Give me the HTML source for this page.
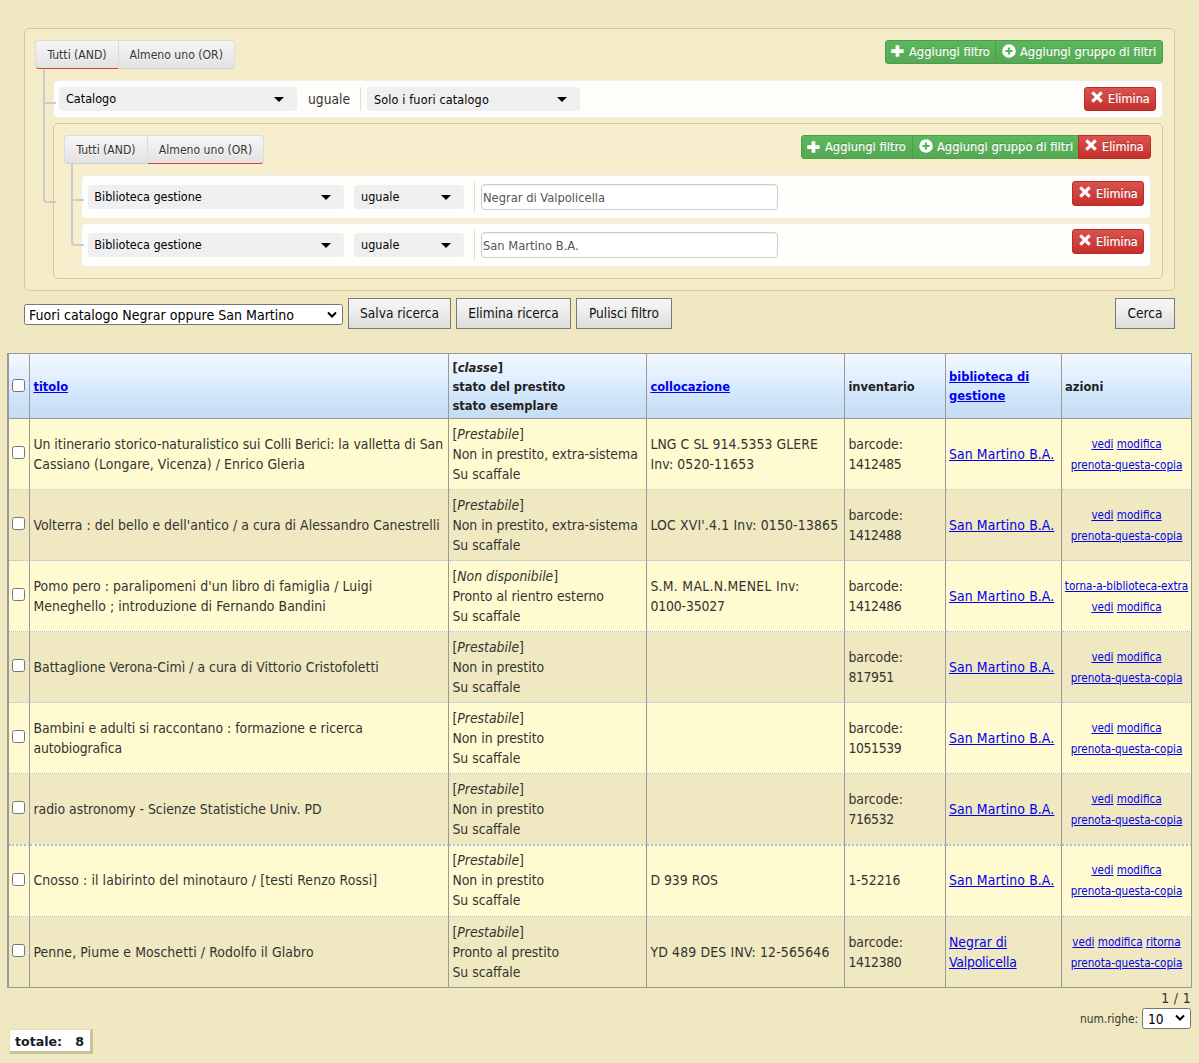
<!DOCTYPE html>
<html lang="it">
<head>
<meta charset="utf-8">
<title>Ricerca esemplari</title>
<style>
*{box-sizing:border-box}
html,body{margin:0;padding:0}
body{width:1199px;height:1063px;overflow:hidden;background:#efe8c0;color:#222;
 font-family:"DejaVu Sans Condensed","DejaVu Sans","Liberation Sans",sans-serif;font-stretch:condensed;font-size:12.5px;position:relative}
a{color:#0000ee;text-decoration:underline}
.abs{position:absolute}

/* ---------- query builder ---------- */
.grp{position:absolute;border:1px solid #dcc896;border-radius:5px;background:rgba(250,240,210,.5)}
.rule{position:absolute;border:1px solid #eee;border-radius:5px;background:rgba(255,255,255,.9)}
.tabs{position:absolute;display:flex;height:29px}
.tab{height:29px;line-height:29px;font-size:12.1px;color:#333;text-align:center;border:1px solid #dcdcdc;border-bottom-color:#d0d0d0;
 background:linear-gradient(#f6f6f6,#e2e2e2);text-shadow:0 1px 0 #fff;white-space:nowrap}
.tab:first-child{border-radius:4px 0 0 4px}
.tab:last-child{border-radius:0 4px 4px 0;border-left:0}
.tab.on{border-bottom:1px solid #d9413c}
.vline,.hline,.elbow{z-index:2}
.vline{position:absolute;width:2px;background:#ccc}
.hline{position:absolute;height:2px;background:#ccc}
.elbow{position:absolute;border:solid #ccc;border-width:0 0 2px 2px;border-radius:0 0 0 4px}
.sel{position:absolute;height:24px;line-height:23px;background:#efefef;border-radius:4px;color:#000;font-size:12.5px;padding-left:7px;white-space:nowrap}
.sel:after{content:"";position:absolute;right:13.5px;top:10px;border:5.2px solid transparent;border-top:5px solid #000;border-bottom:0}
.op{position:absolute;font-size:13.7px;color:#333;line-height:24px}
.sep{position:absolute;width:1px;background:#ddd}
.inp{position:absolute;height:26px;line-height:24px;border:1px solid #ccc;border-radius:4px;background:#fff;color:#555;font-size:12.8px;padding:1px 0 0 1px;
 box-shadow:inset 0 1px 1px rgba(0,0,0,.075);white-space:nowrap}
.btns{position:absolute;display:flex;height:23.5px}
.b{height:100%;line-height:21.5px;color:#fff;font-size:12.8px;white-space:nowrap;border:1px solid;display:flex;align-items:center;
 text-shadow:0 -1px 0 rgba(0,0,0,.2);-webkit-text-stroke:.15px #fff}
.b svg{display:block;flex:none}
.b.g{background:linear-gradient(#5cb85c,#55a955);border-color:#4c9c4c}
.b.r{background:linear-gradient(#d9534f,#c5302c);border-color:#b92c28;font-size:12.6px}
.b.first{border-radius:3px 0 0 3px}
.b.last{border-radius:0 3px 3px 0}
.b.solo{border-radius:3px}
.b+.b{margin-left:-1px}

/* ---------- toolbar ---------- */
.nsel{position:absolute;background:#fff;border:1px solid #767676;border-radius:2.5px;color:#000;white-space:nowrap}
.pbtn{position:absolute;height:31px;line-height:28px;text-align:center;font-size:13.6px;color:#111;border:1px solid #7a7a7a;
 background:linear-gradient(#f7f7f7 0%,#ececec 50%,#dddbdb 100%);white-space:nowrap}

/* ---------- table ---------- */
table{position:absolute;left:7px;top:353px;width:1185px;border-collapse:separate;border-spacing:0;table-layout:fixed;
 border-top:1px solid #999;border-left:2px solid #999}
th,td{padding:0 0 0 4px;border-right:1px solid #999;vertical-align:middle;text-align:left;overflow:hidden}
th{height:65px;padding-top:2px;font-stretch:normal;border-bottom:1px solid #999;background:linear-gradient(#f2f8ff 0%,#e5f1fe 30%,#d5e9fd 56%,#cce1f6 80%,#c6dcf2 100%);
 font-family:"DejaVu Sans","Liberation Sans",sans-serif;font-weight:bold;font-size:11.5px;line-height:19px;color:#222}
td{height:71px;white-space:nowrap;border-bottom:1px dotted #a2c0e6;font-size:13.85px;line-height:20.3px;color:#333}
th{padding-left:3.4px}
td{padding-left:3.4px}
td.c0,th.c0{padding-left:4px}
th:nth-child(6),td:nth-child(6),th:nth-child(7){padding-left:3px}
tr.o td{background:#fffad0}
tr.e td{background:#efe8c0}
tr:last-child td{border-bottom:1px solid #999}
tr.r6 td{border-bottom:0;height:70px}
tr.r7 td{border-top:2px dotted #a3bfe8;height:73px}
tr.r7 td+td{padding-bottom:2px}
td.act{text-align:center;font-size:11.6px;line-height:20.4px;padding:1px 0 0}
td.act a{margin:0}
.cb{display:block;position:relative;top:-1.5px;width:13px;height:13px;border:1px solid #767676;border-radius:2.5px;background:#fff;margin-left:-1px}
i{font-style:italic}
.tot{position:absolute;left:9px;top:1029px;width:84px;height:25px;background:#fff;border:solid;border-width:1px 3px 3px 1px;border-color:#e6dfb6 #c9c49a #c9c49a #e6dfb6;
 font-family:"DejaVu Sans","Liberation Sans",sans-serif;font-stretch:normal;font-weight:bold;font-size:12.6px;line-height:23px;padding-left:5px;color:#1a1a2a;white-space:nowrap}
</style>
</head>
<body>

<!-- QUERY BUILDER -->
<div class="grp" style="left:24px;top:28px;width:1151px;height:263px"></div>
<div class="grp" style="left:53px;top:123px;width:1110px;height:156px"></div>
<div class="tabs" style="left:35px;top:40px"><div class="tab on" style="width:84px">Tutti (AND)</div><div class="tab" style="width:115.5px">Almeno uno (OR)</div></div>
<div class="btns" style="left:885px;top:40px"><div class="b g first" style="width:111px;padding-left:5px"><svg width="13" height="12" viewBox="0 0 13 12" style="margin-top:-1px"><path d="M4.6 0.3h3.7v3.9h4.3v3.7H8.3v3.9H4.6V7.9H0.2V4.2h4.4z" fill="#fff"/></svg><span style="margin-left:5px">Aggiungi filtro</span></div><div class="b g last" style="width:168px;padding-left:6px"><svg width="14" height="14" viewBox="0 0 14 14" style="margin-top:-2.5px"><path fill-rule="evenodd" fill="#fff" d="M7 0.2a6.8 6.8 0 1 0 0 13.6a6.8 6.8 0 1 0 0-13.6zM5.9 3.4h2.2v2.5h2.5v2.2H8.1v2.5H5.9V8.1H3.4V5.9h2.5z"/></svg><span style="margin-left:4px">Aggiungi gruppo di filtri</span></div></div>
<div class="elbow" style="left:43px;top:69px;width:13px;height:134px"></div>
<div class="hline" style="left:43px;top:102px;width:13px"></div>
<div class="rule" style="left:53px;top:80px;width:1110px;height:38px"></div>
<div class="sel" style="left:59px;top:87px;width:238px">Catalogo</div>
<div class="op" style="left:308px;top:87px">uguale</div>
<div class="sep" style="left:360px;top:87px;height:24px"></div>
<div class="sel" style="left:367px;top:87px;width:213px;letter-spacing:.14px;line-height:25px">Solo i fuori catalogo</div>
<div class="btns" style="left:1084px;top:87px"><div class="b r solo" style="width:72px;padding-left:6px"><svg width="12" height="12" viewBox="0 0 12 12" style="margin-top:-3.5px"><path d="M2.4 0.2L6 3.8 9.6 0.2 11.8 2.4 8.2 6l3.6 3.6-2.2 2.2L6 8.2l-3.6 3.6-2.2-2.2L3.8 6 0.2 2.4z" fill="#fff"/></svg><span style="margin-left:5px">Elimina</span></div></div>
<div class="tabs" style="left:64px;top:135px"><div class="tab" style="width:84px">Tutti (AND)</div><div class="tab on" style="width:116px">Almeno uno (OR)</div></div>
<div class="btns" style="left:801px;top:135.25px"><div class="b g first" style="width:112px;padding-left:5px"><svg width="13" height="12" viewBox="0 0 13 12" style="margin-top:-1px"><path d="M4.6 0.3h3.7v3.9h4.3v3.7H8.3v3.9H4.6V7.9H0.2V4.2h4.4z" fill="#fff"/></svg><span style="margin-left:5px">Aggiungi filtro</span></div><div class="b g " style="width:167px;padding-left:6px"><svg width="14" height="14" viewBox="0 0 14 14" style="margin-top:-2.5px"><path fill-rule="evenodd" fill="#fff" d="M7 0.2a6.8 6.8 0 1 0 0 13.6a6.8 6.8 0 1 0 0-13.6zM5.9 3.4h2.2v2.5h2.5v2.2H8.1v2.5H5.9V8.1H3.4V5.9h2.5z"/></svg><span style="margin-left:4px">Aggiungi gruppo di filtri</span></div><div class="b r last" style="width:73px;padding-left:6px"><svg width="12" height="12" viewBox="0 0 12 12" style="margin-top:-3.5px"><path d="M2.4 0.2L6 3.8 9.6 0.2 11.8 2.4 8.2 6l3.6 3.6-2.2 2.2L6 8.2l-3.6 3.6-2.2-2.2L3.8 6 0.2 2.4z" fill="#fff"/></svg><span style="margin-left:5px">Elimina</span></div></div>
<div class="vline" style="left:71px;top:164px;width:2px;height:60px"></div>
<div class="hline" style="left:71px;top:199px;width:13px"></div>
<div class="elbow" style="left:71px;top:200px;width:13px;height:46px"></div>
<div class="rule" style="left:81px;top:175px;width:1070px;height:44px"></div>
<div class="sel" style="left:88px;top:185px;width:256px;padding-left:6.3px">Biblioteca gestione</div>
<div class="sel" style="left:354px;top:185px;width:110px">uguale</div>
<div class="sep" style="left:474px;top:182px;height:30px"></div>
<div class="inp" style="left:481px;top:184px;width:297px">Negrar di Valpolicella</div>
<div class="btns" style="left:1072px;top:181px;height:24.5px"><div class="b r solo" style="width:72px;padding-left:6px"><svg width="12" height="12" viewBox="0 0 12 12" style="margin-top:-3.5px"><path d="M2.4 0.2L6 3.8 9.6 0.2 11.8 2.4 8.2 6l3.6 3.6-2.2 2.2L6 8.2l-3.6 3.6-2.2-2.2L3.8 6 0.2 2.4z" fill="#fff"/></svg><span style="margin-left:5px">Elimina</span></div></div>
<div class="rule" style="left:81px;top:223px;width:1070px;height:44px"></div>
<div class="sel" style="left:88px;top:233px;width:256px;padding-left:6.3px">Biblioteca gestione</div>
<div class="sel" style="left:354px;top:233px;width:110px">uguale</div>
<div class="sep" style="left:474px;top:230px;height:30px"></div>
<div class="inp" style="left:481px;top:232px;width:297px">San Martino B.A.</div>
<div class="btns" style="left:1072px;top:229px;height:24.5px"><div class="b r solo" style="width:72px;padding-left:6px"><svg width="12" height="12" viewBox="0 0 12 12" style="margin-top:-3.5px"><path d="M2.4 0.2L6 3.8 9.6 0.2 11.8 2.4 8.2 6l3.6 3.6-2.2 2.2L6 8.2l-3.6 3.6-2.2-2.2L3.8 6 0.2 2.4z" fill="#fff"/></svg><span style="margin-left:5px">Elimina</span></div></div>

<!-- TOOLBAR -->
<div class="nsel" style="left:24px;top:304px;width:319px;height:21px;line-height:20.5px;font-size:14.05px;padding-left:4px">Fuori catalogo Negrar oppure San Martino<svg class="abs" style="right:5px;top:6px" width="10" height="8" viewBox="0 0 10 8"><path d="M1 1.5l4 4 4-4" fill="none" stroke="#000" stroke-width="2"/></svg></div>
<div class="pbtn" style="left:348px;top:298px;width:103px">Salva ricerca</div>
<div class="pbtn" style="left:456px;top:298px;width:115px">Elimina ricerca</div>
<div class="pbtn" style="left:576px;top:298px;width:96px">Pulisci filtro</div>
<div class="pbtn" style="left:1115px;top:298px;width:60px">Cerca</div>

<!-- TABLE -->
<table><colgroup><col style="width:21px"><col style="width:419px"><col style="width:198px"><col style="width:198px"><col style="width:101px"><col style="width:116px"><col style="width:130px"></colgroup>
<tr><th class="c0"><span class="cb"></span></th><th><a>titolo</a></th><th>[<i>classe</i>]<br>stato del prestito<br>stato esemplare</th><th><a>collocazione</a></th><th>inventario</th><th><a>biblioteca di<br>gestione</a></th><th>azioni</th></tr>
<tr class="o"><td class="c0"><span class="cb"></span></td><td>Un itinerario storico-naturalistico sui Colli Berici: la valletta di San<br><span style="letter-spacing:0.085px">Cassiano (Longare, Vicenza) / Enrico Gleria</span></td><td>[<i>Prestabile</i>]<br>Non in prestito, extra-sistema<br>Su scaffale</td><td><span style="letter-spacing:0.08px">LNG C SL 914.5353 GLERE</span><br><span style="letter-spacing:0.12px">Inv: 0520-11653</span></td><td>barcode:<br><span style="letter-spacing:-0.35px">1412485</span></td><td><a><span style="letter-spacing:0.12px">San Martino B.A.</span></a></td><td class="act"><a>vedi</a> <a>modifica</a><br><a>prenota-questa-copia</a></td></tr>
<tr class="e"><td class="c0"><span class="cb"></span></td><td><span style="letter-spacing:0.054px">Volterra : del bello e dell'antico / a cura di Alessandro Canestrelli</span></td><td>[<i>Prestabile</i>]<br>Non in prestito, extra-sistema<br>Su scaffale</td><td><span style="letter-spacing:0.18px">LOC XVI'.4.1 Inv: 0150-13865</span></td><td>barcode:<br><span style="letter-spacing:-0.35px">1412488</span></td><td><a><span style="letter-spacing:0.12px">San Martino B.A.</span></a></td><td class="act"><a>vedi</a> <a>modifica</a><br><a>prenota-questa-copia</a></td></tr>
<tr class="o"><td class="c0"><span class="cb"></span></td><td><span style="letter-spacing:0.1px">Pomo pero : paralipomeni d'un libro di famiglia / Luigi</span><br><span style="letter-spacing:0.06px">Meneghello ; introduzione di Fernando Bandini</span></td><td>[<i>Non disponibile</i>]<br>Pronto al rientro esterno<br>Su scaffale</td><td><span style="letter-spacing:0.29px">S.M. MAL.N.MENEL Inv:</span><br><span style="letter-spacing:-0.13px">0100-35027</span></td><td>barcode:<br><span style="letter-spacing:-0.35px">1412486</span></td><td><a><span style="letter-spacing:0.12px">San Martino B.A.</span></a></td><td class="act"><a>torna-a-biblioteca-extra</a><br><a>vedi</a> <a>modifica</a></td></tr>
<tr class="e"><td class="c0"><span class="cb"></span></td><td><span style="letter-spacing:0.04px">Battaglione Verona-Cimì / a cura di Vittorio Cristofoletti</span></td><td>[<i>Prestabile</i>]<br>Non in prestito<br>Su scaffale</td><td></td><td>barcode:<br><span style="letter-spacing:-0.35px">817951</span></td><td><a><span style="letter-spacing:0.12px">San Martino B.A.</span></a></td><td class="act"><a>vedi</a> <a>modifica</a><br><a>prenota-questa-copia</a></td></tr>
<tr class="o"><td class="c0"><span class="cb"></span></td><td>Bambini e adulti si raccontano : formazione e ricerca<br><span style="letter-spacing:-0.1px">autobiografica</span></td><td>[<i>Prestabile</i>]<br>Non in prestito<br>Su scaffale</td><td></td><td>barcode:<br><span style="letter-spacing:-0.35px">1051539</span></td><td><a><span style="letter-spacing:0.12px">San Martino B.A.</span></a></td><td class="act"><a>vedi</a> <a>modifica</a><br><a>prenota-questa-copia</a></td></tr>
<tr class="e r6"><td class="c0"><span class="cb"></span></td><td>radio astronomy - Scienze Statistiche Univ. PD</td><td>[<i>Prestabile</i>]<br>Non in prestito<br>Su scaffale</td><td></td><td>barcode:<br><span style="letter-spacing:-0.35px">716532</span></td><td><a><span style="letter-spacing:0.12px">San Martino B.A.</span></a></td><td class="act"><a>vedi</a> <a>modifica</a><br><a>prenota-questa-copia</a></td></tr>
<tr class="o r7"><td class="c0"><span class="cb"></span></td><td><span style="letter-spacing:0.12px">Cnosso : il labirinto del minotauro / [testi Renzo Rossi]</span></td><td>[<i>Prestabile</i>]<br>Non in prestito<br>Su scaffale</td><td>D 939 ROS</td><td>1-52216</td><td><a><span style="letter-spacing:0.12px">San Martino B.A.</span></a></td><td class="act"><a>vedi</a> <a>modifica</a><br><a>prenota-questa-copia</a></td></tr>
<tr class="e"><td class="c0"><span class="cb"></span></td><td><span style="letter-spacing:0.12px">Penne, Piume e Moschetti / Rodolfo il Glabro</span></td><td>[<i>Prestabile</i>]<br>Pronto al prestito<br>Su scaffale</td><td><span style="letter-spacing:0.18px">YD 489 DES INV: 12-565646</span></td><td>barcode:<br><span style="letter-spacing:-0.35px">1412380</span></td><td><a>Negrar di<br><span style="letter-spacing:-0.2px">Valpolicella</span></a></td><td class="act"><a>vedi</a> <a>modifica</a> <a>ritorna</a><br><a>prenota-questa-copia</a></td></tr>
</table>
<div class="abs" style="right:8px;top:990px;font-size:13.85px;color:#333;letter-spacing:.35px;white-space:pre">1 / 1</div>
<div class="abs" style="left:1080px;top:1012.3px;font-size:11.8px;color:#333">num.righe:</div>
<div class="nsel" style="left:1142px;top:1008px;width:49px;height:21px;line-height:21px;font-size:13.6px;padding-left:5px">10<svg class="abs" style="right:5px;top:5px" width="10" height="8" viewBox="0 0 10 8"><path d="M1 1.5l4 4 4-4" fill="none" stroke="#000" stroke-width="2"/></svg></div>
<div class="tot">totale:&nbsp;&nbsp; 8</div>

</body>
</html>
